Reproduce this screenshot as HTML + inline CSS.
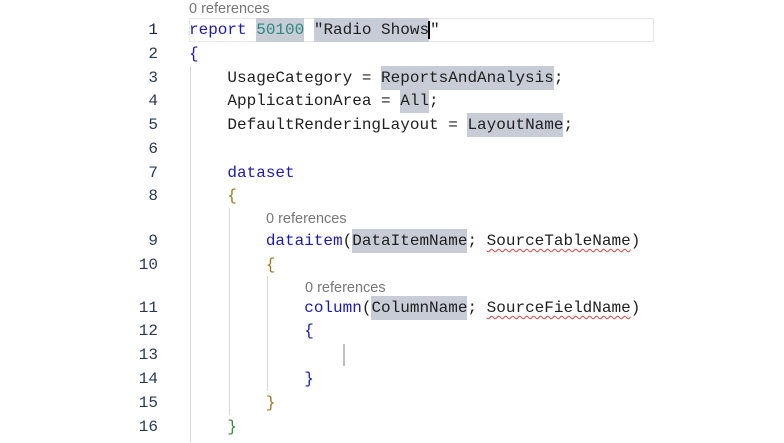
<!DOCTYPE html>
<html><head><meta charset="utf-8"><style>
body{margin:0;width:784px;height:443px;background:#fff;overflow:hidden;position:relative;font-family:"Liberation Mono",monospace;}
.ln{position:absolute;left:100px;width:58px;text-align:right;font-size:16px;color:#2b3a55;line-height:24px;}
.c{position:absolute;left:189px;font-size:16px;line-height:24px;color:#1f1f1f;white-space:pre;}
.lens{position:absolute;font-family:"Liberation Sans",sans-serif;font-size:14.5px;color:#777;line-height:16px;}
.k{color:#1a1ab0}.n{color:#2a8a80}.h{background:#c8ccd6;padding:3px 0 3px 0}
.b1{color:#1a1ab0}.b2{color:#9a7a20}.b3{color:#3a8a3a}
.sq{text-decoration:underline wavy #d44;text-decoration-thickness:1px;text-underline-offset:3px;}
.g{position:absolute;width:1px;background:#d8d8d8;}
</style></head><body>
<div class="lens" style="left:189px;top:1px">0 references</div>
<div style="position:absolute;left:189px;top:18px;width:465px;height:24px;border:1px solid #e6e6e6;box-sizing:border-box"></div>
<div class="g" style="left:190px;top:66px;height:376px"></div>
<div class="g" style="left:229px;top:208px;height:207px"></div>
<div class="g" style="left:267px;top:276px;height:115px"></div>
<div style="position:absolute;left:343px;top:344px;width:2px;height:22px;background:#c0c0c0"></div>

<div class="ln" style="top:18px;color:#1a2540">1</div><div class="c" style="top:18px"><span class="k">report</span> <span class="n h">50100</span> <span class="h">"Radio Shows</span><span style="border-left:2px solid #000;margin-left:-1px"></span>"</div>
<div class="ln" style="top:42px">2</div><div class="c" style="top:42px"><span class="b1">{</span></div>
<div class="ln" style="top:66px">3</div><div class="c" style="top:66px">    UsageCategory = <span class="h">ReportsAndAnalysis</span>;</div>
<div class="ln" style="top:89px">4</div><div class="c" style="top:89px">    ApplicationArea = <span class="h">All</span>;</div>
<div class="ln" style="top:113px">5</div><div class="c" style="top:113px">    DefaultRenderingLayout = <span class="h">LayoutName</span>;</div>
<div class="ln" style="top:137px">6</div>
<div class="ln" style="top:161px">7</div><div class="c" style="top:161px">    <span class="k">dataset</span></div>
<div class="ln" style="top:184px">8</div><div class="c" style="top:184px">    <span class="b2">{</span></div>
<div class="lens" style="left:266px;top:211px">0 references</div>
<div class="ln" style="top:229px">9</div><div class="c" style="top:229px">        <span class="k">dataitem</span>(<span class="h">DataItemName</span>; <span class="sq">SourceTableName</span>)</div>
<div class="ln" style="top:253px">10</div><div class="c" style="top:253px">        <span class="b2">{</span></div>
<div class="lens" style="left:305px;top:280px">0 references</div>
<div class="ln" style="top:296px">11</div><div class="c" style="top:296px">            <span class="k">column</span>(<span class="h">ColumnName</span>; <span class="sq">SourceFieldName</span>)</div>
<div class="ln" style="top:319px">12</div><div class="c" style="top:319px">            <span class="b1">{</span></div>
<div class="ln" style="top:343px">13</div>
<div class="ln" style="top:367px">14</div><div class="c" style="top:367px">            <span class="b1">}</span></div>
<div class="ln" style="top:391px">15</div><div class="c" style="top:391px">        <span class="b2">}</span></div>
<div class="ln" style="top:415px">16</div><div class="c" style="top:415px">    <span class="b3">}</span></div>
</body></html>
